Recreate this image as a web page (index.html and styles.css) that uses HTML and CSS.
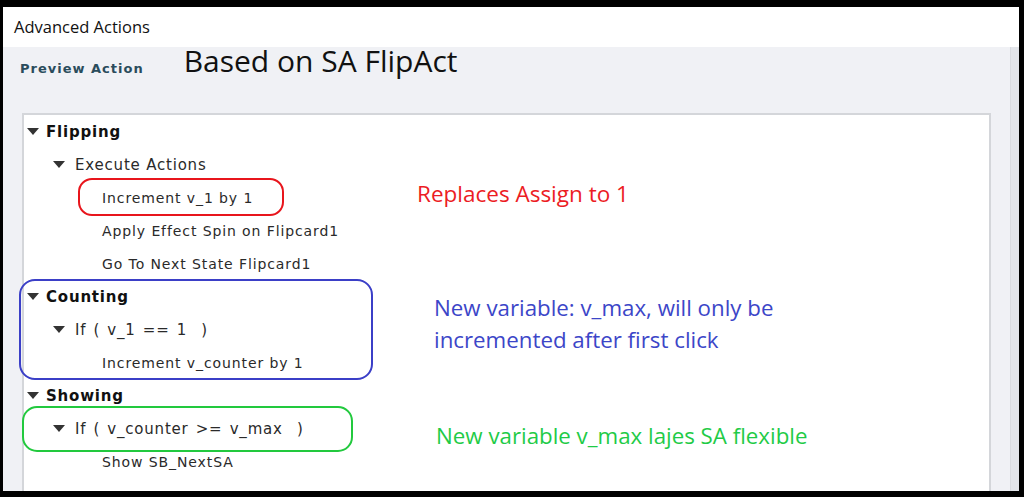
FILE: index.html
```html
<!DOCTYPE html>
<html>
<head>
<meta charset="utf-8">
<link rel="stylesheet" href="styles.css">
</head>
<body>
<div class="window">
  <div class="titlebar">Advanced Actions</div>
  <div class="body">
    <div class="main">
      <div class="header">
        <span class="preview">Preview Action</span>
        <span class="headline">Based on SA FlipAct</span>
      </div>
      <div class="panel">
        <div class="tree">
          <div class="row lvl0"><span class="tri"></span>Flipping</div>
          <div class="row lvl1"><span class="tri"></span>Execute Actions</div>
          <div class="row lvl2"><span class="mark red"></span>Increment v_1 by 1<span class="note red-t">Replaces Assign to 1</span></div>
          <div class="row lvl2">Apply Effect Spin on Flipcard1</div>
          <div class="row lvl2">Go To Next State Flipcard1</div>
          <div class="group">
            <span class="mark blue"></span>
            <div class="row lvl0"><span class="tri"></span>Counting</div>
            <div class="row lvl1 cond"><span class="tri"></span>If ( v_1 == 1&nbsp; )<span class="note blue-t">New variable: v_max, will only be<br>incremented after first click</span></div>
            <div class="row lvl2">Increment v_counter by 1</div>
          </div>
          <div class="row lvl0"><span class="tri"></span>Showing</div>
          <div class="row lvl1 cond"><span class="mark green"></span><span class="tri"></span>If ( v_counter &gt;= v_max&nbsp; )<span class="note green-t">New variable v_max lajes SA flexible</span></div>
          <div class="row lvl2">Show SB_NextSA</div>
        </div>
      </div>
    </div>
    <div class="gutter"></div>
  </div>
</div>
</body>
</html>
```

FILE: styles.css
```css
html, body {
  margin: 0;
  padding: 0;
  background: #000;
  height: 100%;
  overflow: hidden;
}
.window {
  margin: 7px 5px 0 3px;
  height: 484px;
  display: flex;
  flex-direction: column;
  background: #f0f1f5;
  overflow: hidden;
}
.titlebar {
  height: 40px;
  flex: none;
  background: #fff;
  font-family: "Open Sans", sans-serif;
  font-size: 16.5px;
  color: #111;
  line-height: 40px;
  padding-left: 11px;
}
.body {
  flex: 1;
  display: flex;
  min-height: 0;
}
.main {
  flex: 1;
  display: flex;
  flex-direction: column;
  min-width: 0;
}
.gutter {
  width: 8px;
  flex: none;
  background: #e3e5ea;
  border-left: 1px solid #d9dbe0;
}
.header {
  height: 66px;
  flex: none;
  display: flex;
  align-items: flex-start;
}
.preview {
  font-family: "DejaVu Sans", Verdana, sans-serif;
  font-weight: bold;
  font-size: 13px;
  line-height: 16px;
  letter-spacing: 1px;
  color: #2a4c5c;
  margin: 14px 0 0 17px;
}
.headline {
  font-family: "Open Sans", sans-serif;
  font-size: 30px;
  line-height: 40px;
  color: #111;
  margin: -6px 0 0 40px;
}
.panel {
  flex: 1;
  margin: 0 19px 0 19px;
  background: #fff;
  border: 2px solid #d4d6da;
  border-bottom: none;
}
.tree {
  font-family: "DejaVu Sans", Verdana, sans-serif;
  color: #2a2a2a;
}
.row {
  height: 33px;
  display: flex;
  align-items: center;
  position: relative;
  white-space: nowrap;
}
.lvl0 {
  font-weight: bold;
  font-size: 15px;
  letter-spacing: 0.8px;
  color: #111;
  padding-left: 3px;
}
.lvl1 {
  font-size: 15px;
  letter-spacing: 0.8px;
  padding-left: 29px;
}
.cond {
  word-spacing: 1.6px;
}
.lvl2 {
  font-size: 14px;
  letter-spacing: 0.9px;
  padding-left: 78px;
}
.tri {
  flex: none;
  width: 0;
  height: 0;
  border-left: 6px solid transparent;
  border-right: 6px solid transparent;
  border-top: 7px solid #333;
  margin-right: 7px;
}
.lvl1 .tri {
  margin-right: 10px;
}
.group {
  position: relative;
}
.mark {
  position: absolute;
  border-style: solid;
  border-width: 2px;
  border-radius: 14px;
  box-sizing: border-box;
}
.mark.red {
  border-color: #e8151c;
  left: 54px;
  top: -3px;
  width: 206px;
  height: 38px;
}
.mark.blue {
  border-color: #3b3fc7;
  left: -5px;
  top: -1px;
  width: 354px;
  height: 101px;
  border-radius: 16px;
}
.mark.green {
  border-color: #22c93e;
  left: -2px;
  top: -6px;
  width: 331px;
  height: 46px;
  border-radius: 15px;
}
.note {
  position: absolute;
  font-family: "Open Sans", sans-serif;
  font-weight: normal;
  font-size: 22.3px;
  letter-spacing: 0;
  word-spacing: 0;
  line-height: 32px;
}
.red-t {
  color: #ec1c24;
  left: 393px;
  top: -3px;
  font-size: 22.5px;
}
.blue-t {
  color: #3c46c8;
  left: 410px;
  top: -21px;
}
.green-t {
  color: #1fcb47;
  left: 412px;
  top: 8px;
}
```
